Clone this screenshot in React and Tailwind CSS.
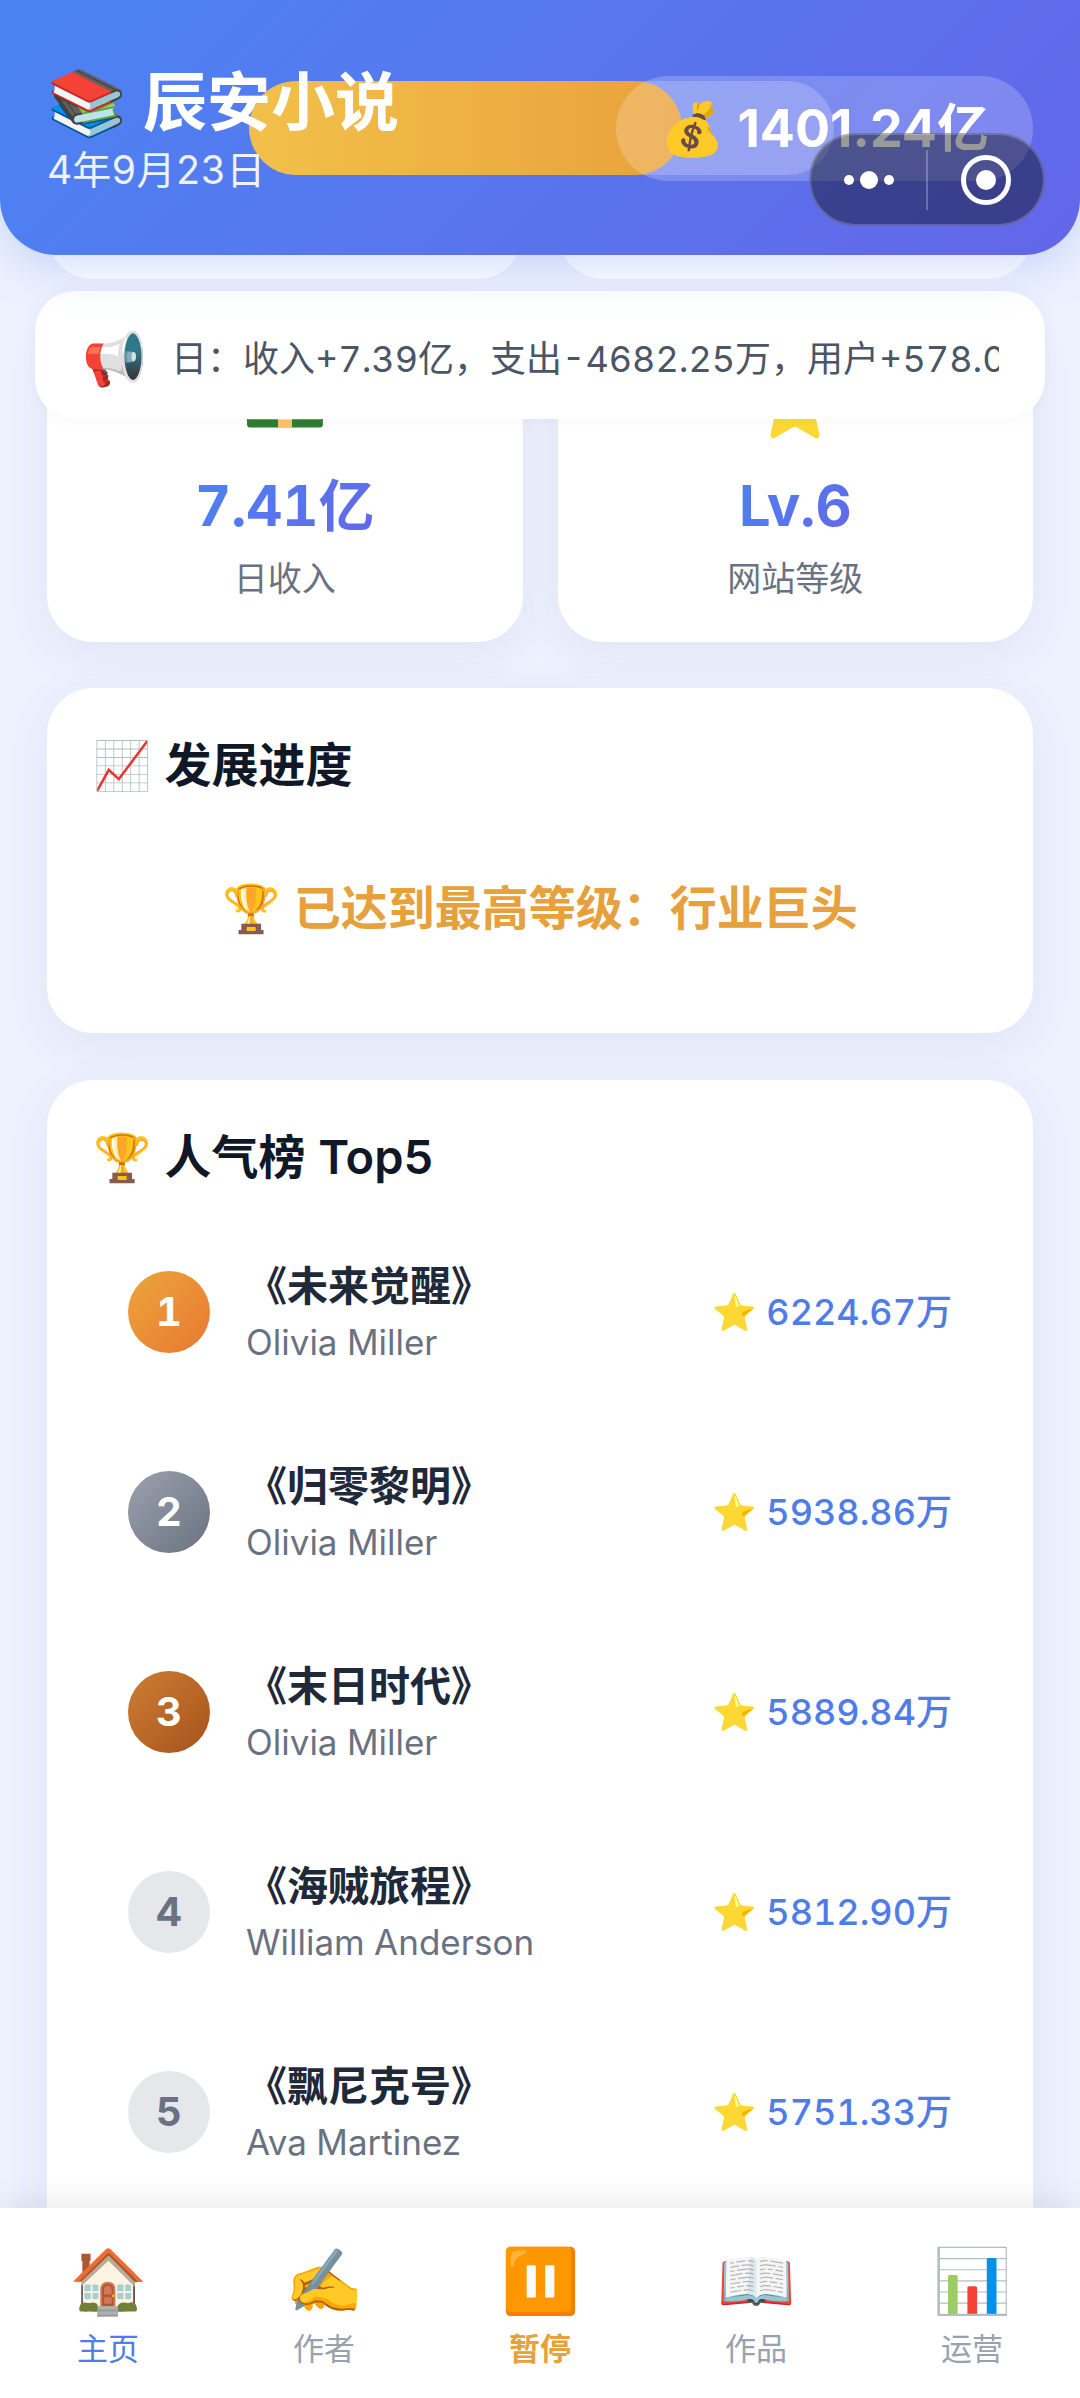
import React from 'react'

const books = [
    { title: '《未来觉醒》', author: 'Olivia Miller', score: '6224.67万', badge: 'bg-linear-135 from-[#eba53c] to-[#e87830] text-white' },
    { title: '《归零黎明》', author: 'Olivia Miller', score: '5938.86万', badge: 'bg-linear-135 from-[#9ca3af] to-[#6b7280] text-white' },
    { title: '《末日时代》', author: 'Olivia Miller', score: '5889.84万', badge: 'bg-linear-135 from-[#cd7f32] to-[#a5521c] text-white' },
    { title: '《海贼旅程》', author: 'William Anderson', score: '5812.90万', badge: 'bg-gray-200 text-gray-500' },
    { title: '《飘尼克号》', author: 'Ava Martinez', score: '5751.33万', badge: 'bg-gray-200 text-gray-500' },
]

const stats = [
    { icon: '💵', value: '7.41亿', label: '日收入' },
    { icon: '⭐', value: 'Lv.6', label: '网站等级' },
]

const tabs = [
    { icon: '🏠', label: '主页', color: 'text-[#4f7de8]' },
    { icon: '✍️', label: '作者', color: 'text-gray-400' },
    { icon: '⏸️', label: '暂停', color: 'text-[#e6a03c] font-bold' },
    { icon: '📖', label: '作品', color: 'text-gray-400' },
    { icon: '📊', label: '运营', color: 'text-gray-400' },
]

const cardStyle = 'bg-white rounded-[46px] shadow-[0_12px_46px_rgba(60,60,120,0.08)]'

function Header() {
    return (
        <header className="relative z-20 shrink-0 h-[255px] px-[47px] pt-[68px] rounded-b-[56px] bg-linear-135 from-[#4984f2] to-[#6366e9] shadow-[0_12px_46px_rgba(79,125,232,0.25)] text-white">
            <div
                role="progressbar"
                aria-valuenow={74}
                className="absolute left-[249px] right-[246px] top-[81px] h-[94px] rounded-full bg-white/20 overflow-hidden"
            >
                <div className="w-[74%] h-full rounded-full bg-linear-to-r from-[#f2c04a] to-[#e9a13c]"></div>
            </div>
            <div className="relative flex items-start justify-between">
                <div>
                    <h1 className="flex gap-4 text-[64px] leading-[68px] font-bold">
                        <span>📚</span>辰安小说
                    </h1>
                    <p className="text-[39px] leading-[68px] text-white/90">4年9月23日</p>
                </div>
                <div className="mt-2 h-[105px] px-11 flex items-center rounded-full bg-white/20 text-[52px] font-bold normal-nums">
                    💰 1401.24亿
                </div>
            </div>
            <div className="absolute right-[35px] top-[133px] w-[236px] h-[93px] flex items-center rounded-full bg-black/40 border-2 border-white/20">
                <button aria-label="更多" className="flex-1 h-full flex items-center justify-center gap-[6px]">
                    <span className="size-[10px] rounded-full bg-white"></span>
                    <span className="size-[18px] rounded-full bg-white"></span>
                    <span className="size-[10px] rounded-full bg-white"></span>
                </button>
                <span className="w-[2px] h-[60px] bg-white/25"></span>
                <button aria-label="关闭" className="flex-1 h-full flex items-center justify-center">
                    <span className="size-[50px] rounded-full border-[5px] border-white flex items-center justify-center">
                        <span className="size-5 rounded-full bg-white"></span>
                    </span>
                </button>
            </div>
        </header>
    )
}

function Notice() {
    return (
        <div className="relative z-10 mx-[35px] mt-3 h-[128px] pt-2 pl-[47px] pr-[46px] flex items-center gap-6 bg-white rounded-[40px] shadow-[0_0_16px_rgba(60,60,120,0.05)]">
            <span className="text-[52px]">📢</span>
            <p className="flex-1 overflow-hidden whitespace-nowrap text-[36px] text-gray-600">
                日：收入+7.39亿，支出-4682.25万，用户+578.03万
            </p>
        </div>
    )
}

function App() {
    return (
        <div className="h-screen flex flex-col overflow-hidden bg-[#eef2ff] font-['Inter','Noto_Sans_CJK_SC',sans-serif] tabular-nums">
            <Header />
            <main className="flex-1 min-h-0">
                <div className="-mt-16 grid grid-cols-2 gap-[35px] px-[47px]">
                    <div className="h-[88px] bg-white rounded-b-[46px]"></div>
                    <div className="h-[88px] bg-white rounded-b-[46px]"></div>
                </div>
                <Notice />
                <div className="-mt-[105px] px-[47px] grid grid-cols-2 gap-[35px]">
                    {stats.map((item) => (
                        <div key={item.label} className={`${cardStyle} pt-[46px] pb-9 flex flex-col items-center`}>
                            <span className="text-[69px] leading-[84px]">{item.icon}</span>
                            <strong className="mt-5 text-[56px] leading-[84px] font-bold bg-linear-135 from-[#4984f2] to-[#6366e9] bg-clip-text text-transparent">
                                {item.value}
                            </strong>
                            <span className="mt-1 text-[34px] leading-[54px] text-gray-500">{item.label}</span>
                        </div>
                    ))}
                </div>
                <div className="px-[47px] pt-[46px] flex flex-col gap-[47px]">
                    <section className={`${cardStyle} p-[46px]`}>
                        <h2 className="text-[47px] leading-[62px] font-semibold text-gray-900">📈 发展进度</h2>
                        <p className="pt-[81px] pb-12 text-center text-[47px] leading-[62px] font-semibold text-[#e6a03c]">
                            🏆 已达到最高等级：行业巨头
                        </p>
                    </section>
                    <section className={`${cardStyle} p-[46px]`}>
                        <h2 className="text-[47px] leading-[62px] font-semibold text-gray-900">🏆 人气榜 Top5</h2>
                        <ol className="mt-6">
                            {books.map((book, index) => (
                                <li key={book.title} className="h-[200px] px-[35px] flex items-center">
                                    <span className={`size-[82px] rounded-full flex items-center justify-center text-[40px] font-bold ${book.badge}`}>
                                        {index + 1}
                                    </span>
                                    <div className="ml-9 pt-1 flex-1">
                                        <p className="text-[41px] leading-[56px] font-semibold text-gray-800">{book.title}</p>
                                        <p className="text-[35px] leading-[56px] text-gray-500">{book.author}</p>
                                    </div>
                                    <span className="text-[36px] font-medium text-[#4f7de8]">⭐ {book.score}</span>
                                </li>
                            ))}
                        </ol>
                    </section>
                </div>
            </main>
            <nav className="relative z-20 shrink-0 h-[190px] flex bg-white shadow-[0_-6px_30px_rgba(0,0,0,0.08)]">
                {tabs.map((tab) => (
                    <button key={tab.label} className="flex-1 pt-8 flex flex-col items-center">
                        <span className="text-[63px] leading-[80px]">{tab.icon}</span>
                        <span className={`mt-0.5 text-[31px] leading-[54px] ${tab.color}`}>{tab.label}</span>
                    </button>
                ))}
            </nav>
        </div>
    )
}

export default App
